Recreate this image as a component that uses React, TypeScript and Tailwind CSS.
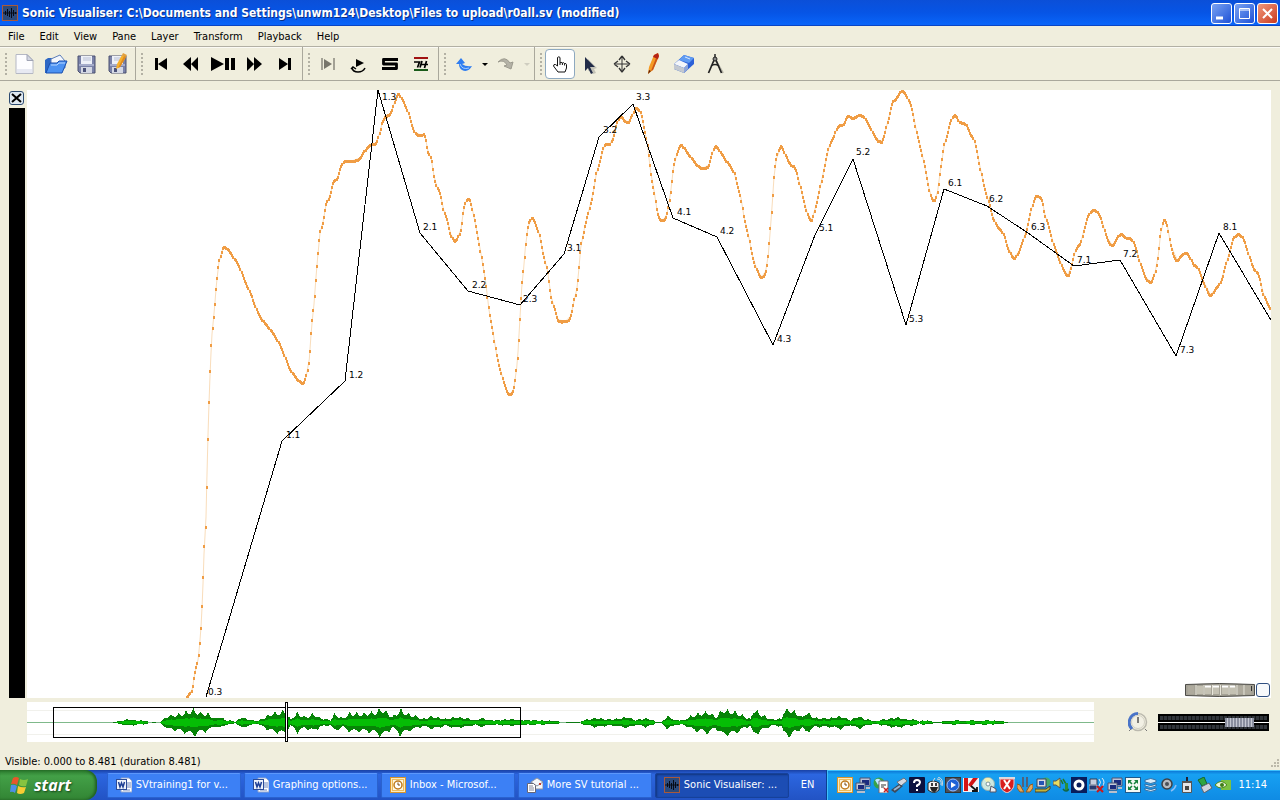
import { useState, type ReactNode } from "react"

type Point = [number, number]

// Pitch track, in window coordinates
const pitchPoints: Point[] = [
  [187, 697], [192, 690], [193, 685], [194, 678], [196, 668], [198, 660], [199, 651], [200, 640], [201, 627],
  [202, 608], [203, 584], [204, 554], [206, 517], [207, 474], [208, 435], [209, 403], [210, 376], [211, 353],
  [212, 334], [213.7, 317], [215, 302], [216, 289], [217, 279], [219, 262], [220.7, 256], [222.7, 249],
  [224.3, 247], [229.3, 251], [233.3, 257], [239.3, 266], [243.3, 277], [251, 294], [258.3, 313], [264.3, 322],
  [270, 329], [275.7, 337], [283, 351], [289, 367], [295, 376], [299.3, 381], [302, 383], [304.7, 381],
  [306.7, 374], [309.3, 359], [311, 335], [312.3, 320], [314, 304], [316, 277], [317.7, 257], [320, 233],
  [323, 222], [326, 205], [330, 195], [333.3, 183], [337.7, 177], [341, 167], [345, 161], [351.7, 161],
  [360, 158], [365.3, 150], [370, 145], [376, 143], [380, 132], [382, 123], [385.7, 117], [391.3, 112],
  [395, 101], [398.3, 94], [402.3, 99], [407.7, 111], [414.7, 132], [420.7, 135], [425, 136], [428, 151],
  [431.3, 159], [434, 176], [436.7, 186], [440.3, 194], [443.7, 210], [447.3, 220], [450.7, 234], [455.3, 241],
  [458, 237], [461, 229], [463.3, 212], [465.7, 202], [468.7, 199], [471, 203], [474, 217], [477, 232],
  [480.7, 252], [485.7, 282], [489, 310], [493, 332], [496.7, 355], [500, 368], [504, 383], [507.7, 392],
  [510.3, 394], [513.7, 389], [516.7, 368], [518, 352], [519.7, 323], [521.7, 288], [523.7, 268], [525.3, 248],
  [528, 227], [532, 218], [535.7, 224], [539.3, 234], [543, 252], [547.7, 272], [551, 296], [554.7, 309],
  [558.3, 320], [565.7, 321], [570.7, 316], [574.3, 300], [577, 288], [578.7, 271], [580.7, 248], [584.3, 229],
  [589, 210], [593.3, 192], [596.3, 174], [600, 161], [604.7, 145], [610, 144], [614, 135], [616.7, 124],
  [621, 116], [624.3, 120], [628.3, 122], [632.3, 115], [636.3, 108], [640, 111], [643, 122], [647.3, 144],
  [650.7, 172], [654.3, 192], [657, 210], [660, 219], [663.3, 220], [667, 214], [670.7, 192], [673.3, 169],
  [677.3, 152], [681.7, 145], [685.7, 150], [691.7, 158], [698.3, 166], [703.3, 168], [709, 165], [712.3, 153],
  [716, 146], [720, 151], [726.7, 161], [734, 172], [737.3, 185], [741, 198], [744, 217], [748, 233],
  [752.3, 255], [756.7, 269], [761.7, 277], [765.7, 271], [768.3, 255], [770.3, 230], [772.3, 203], [774, 177],
  [776.3, 159], [781.3, 146], [786, 156], [790.7, 164], [795.7, 169], [799.3, 182], [803.3, 198], [807.3, 213],
  [811.7, 220], [815.3, 208], [820, 188], [824.3, 168], [829.3, 146], [833.3, 138], [837.7, 127], [843.3, 124],
  [848.3, 116], [852.7, 118], [860, 115], [865, 118], [870.7, 128], [876, 138], [881.3, 142], [884.7, 134],
  [888.7, 118], [892.7, 103], [897.3, 97], [902, 91], [906.7, 96], [912.3, 110], [916.7, 132], [921.7, 152],
  [925.7, 171], [929, 188], [931.7, 198], [935, 200], [937.7, 191], [940, 173], [942.3, 158], [944.3, 145],
  [947.7, 133], [951, 121], [955, 115], [960, 122], [965.7, 124], [970, 133], [974.3, 140], [977.3, 153],
  [980.7, 170], [984, 185], [988.3, 200], [992.3, 215], [996.7, 225], [1003.3, 233], [1008.3, 248],
  [1014.3, 258], [1019, 251], [1024.3, 237], [1028.3, 223], [1031.7, 208], [1036.7, 196], [1042.3, 201],
  [1045, 215], [1049.3, 228], [1053.3, 243], [1059, 258], [1064, 270], [1068, 275], [1071.7, 265], [1076, 249],
  [1080.7, 243], [1084, 230], [1088.3, 216], [1093.3, 210], [1097.3, 212], [1101.7, 220], [1106.7, 237],
  [1112.3, 245], [1117.3, 238], [1121, 234], [1126.7, 238], [1131.7, 239], [1136, 248], [1140, 262],
  [1145.7, 277], [1150.7, 282], [1155, 273], [1158.3, 255], [1160.7, 233], [1164, 220], [1167.3, 225],
  [1170.7, 245], [1177.3, 260], [1181.7, 255], [1186, 253], [1190, 257], [1193.3, 264], [1197.3, 267],
  [1203.3, 281], [1210.7, 295], [1216, 288], [1220.7, 282], [1225, 268], [1230, 250], [1234, 238], [1238.7, 234],
  [1244, 240], [1249, 255], [1253.3, 267], [1259, 276], [1263.3, 293], [1270, 308],
]

const tempoPoints: Point[] = [
  [206, 697], [282, 441], [345, 381], [378, 90], [420, 233], [468, 291], [520, 305], [564, 254], [599, 137],
  [633, 104], [673, 218], [717, 237], [773, 345], [815, 235], [853, 159], [906, 325], [944, 189], [987, 206],
  [1028, 233], [1074, 266], [1120, 260], [1176, 356], [1219, 233], [1272, 322],
]

const beatLabels: [string, number, number][] = [
  ["0.3", 208, 695], ["1.1", 286, 438], ["1.2", 349, 378], ["1.3", 382, 100], ["2.1", 423, 230],
  ["2.2", 472, 288], ["2.3", 523, 302], ["3.1", 567, 251], ["3.2", 603, 133], ["3.3", 636, 100],
  ["4.1", 677, 215], ["4.2", 720, 234], ["4.3", 777, 342], ["5.1", 819, 231], ["5.2", 856, 155],
  ["5.3", 909, 322], ["6.1", 948, 186], ["6.2", 989, 202], ["6.3", 1031, 230], ["7.1", 1077, 263],
  ["7.2", 1123, 257], ["7.3", 1180, 353], ["8.1", 1223, 230],
]

// Overview envelope: x, half height
const envelope: Point[] = [
  [113, 0], [120, 1], [127, 3], [134, 2], [147, 1], [148, 0], [159, 0], [161, 1], [167, 6], [180, 8], [193, 12],
  [200, 9], [208, 8], [215, 3], [219, 6], [225, 2], [233, 1], [235, 0], [237, 2], [241, 5], [247, 3], [257, 1],
  [263, 4], [270, 8], [280, 10], [284, 11], [290, 3], [297, 9], [305, 5], [313, 8], [320, 4], [330, 2], [334, 8],
  [342, 4], [350, 9], [360, 8], [370, 9], [375, 10], [382, 13], [392, 5], [400, 12], [407, 8], [415, 6], [422, 3],
  [432, 6], [445, 3], [455, 5], [465, 4], [475, 2], [480, 4], [490, 2], [500, 2], [510, 3], [520, 2], [530, 2],
  [558, 1], [560, 0], [580, 0], [583, 2], [595, 4], [605, 3], [615, 3], [627, 5], [635, 2], [645, 4], [653, 2],
  [655, 0], [661, 0], [663, 2], [667, 6], [675, 2], [683, 2], [693, 7], [708, 10], [715, 5], [722, 12], [735, 10],
  [745, 5], [750, 3], [753, 13], [760, 8], [770, 3], [781, 3], [783, 11], [790, 13], [802, 5], [805, 10],
  [815, 4], [830, 4], [840, 6], [848, 3], [850, 2], [858, 6], [865, 3], [874, 1], [885, 3], [897, 5], [905, 3],
  [917, 2], [919, 0], [922, 2], [930, 1], [934, 0], [950, 1], [955, 2], [963, 1], [970, 2], [978, 1], [985, 2],
  [999, 1], [1008, 0],
]

function valueAt(points: Point[], x: number) {
  for (let i = 1; i < points.length; i++) {
    const [x0, y0] = points[i - 1]
    const [x1, y1] = points[i]
    if (x <= x1) return y0 + ((x - x0) / (x1 - x0)) * (y1 - y0)
  }
  return points[points.length - 1][1]
}

// Hermite interpolation, flat at the turning points so peaks stay round
function smoothAt(points: Point[], x: number) {
  const last = points.length - 1
  const slope = (i: number) => (points[i + 1][1] - points[i][1]) / (points[i + 1][0] - points[i][0])
  const tangent = (i: number) => {
    if (i <= 0 || i >= last) return slope(i <= 0 ? 0 : last - 1)
    if (slope(i - 1) * slope(i) <= 0) return 0
    return (points[i + 1][1] - points[i - 1][1]) / (points[i + 1][0] - points[i - 1][0])
  }
  let i = 0
  while (i < last - 1 && x > points[i + 1][0]) i++
  const [x0, y0] = points[i]
  const [x1, y1] = points[i + 1]
  const h = x1 - x0
  const t = Math.min(1, (x - x0) / h)
  const u = 1 - t
  return (1 + 2 * t) * u * u * y0 + t * u * u * h * tangent(i) + t * t * (3 - 2 * t) * y1 - t * t * u * h * tangent(i + 1)
}

const toPath = (points: Point[]) => points.map(([x, y], i) => `${i ? "L" : "M"}${x} ${y}`).join("")

function dotsPath() {
  let d = ""
  for (let x = 187; x < 1271; x += 1.16) {
    d += `M${Math.round(x) - 1} ${Math.round(smoothAt(pitchPoints, x)) - 1}h2v3h-2z`
  }
  return d
}

function wavePath(scale: number, rough: number) {
  let d = ""
  for (let x = 113; x < 1008; x++) {
    const amp = valueAt(envelope, x)
    if (amp < 0.4) continue
    const up = amp * scale * (1 - rough * Math.abs(Math.sin(x * 12.9898)))
    const down = amp * scale * (1 - rough * Math.abs(Math.sin(x * 78.233)))
    d += `M${x} ${722 - Math.round(up)}v${Math.round(up) + Math.round(down) + 1}`
  }
  return d
}

const menus = ["File", "Edit", "View", "Pane", "Layer", "Transform", "Playback", "Help"]

function Svg({ children, size = 24 }: { children: ReactNode; size?: number }) {
  return (
    <svg width={size} height={size} viewBox={`0 0 ${size} ${size}`} className="shrink-0" aria-hidden="true">
      {children}
    </svg>
  )
}

function WaveLogo() {
  return (
    <Svg size={16}>
      <rect x="0.5" y="0.5" width="15" height="15" fill="#2b4a7c" stroke="#a8593c" />
      <path d="M1 8h14" stroke="#0a0f1c" />
      <path d="M3.500 6v4M5.500 4v7M7.500 6v6M9.500 3v10M11.500 5v6M13.500 7v2" stroke="#060a14" fill="none" />
    </Svg>
  )
}

type ToolProps = { label: string; active?: boolean; disabled?: boolean; narrow?: boolean; onClick?: () => void; children: ReactNode }

function Tool({ label, active, disabled, narrow, onClick, children }: ToolProps) {
  return (
    <button
      type="button"
      aria-label={label}
      disabled={disabled}
      onClick={onClick}
      className={`flex h-[30px] items-center justify-center rounded border ${narrow ? "w-[10px]" : "w-[30px]"} ${
        active ? "border-[#8ea9c0] bg-white" : "border-transparent"
      }`}
    >
      {children}
    </button>
  )
}

function ToolGroup({ children, last }: { children: ReactNode; last?: boolean }) {
  return (
    <div className={`flex h-full items-center ${last ? "pl-[5px]" : "border-r border-[#aaa89c] pr-[2px] pl-[5px]"}`}>
      <div className="mr-[3px] flex flex-col gap-[2px]">
        {[0, 1, 2, 3, 4, 5].map((n) => (
          <span key={n} className="h-[2px] w-[2px] bg-[#b3b1a4]" />
        ))}
      </div>
      <div className="flex gap-px">{children}</div>
    </div>
  )
}

const floppy = (
  <>
    <path d="M3 4h17v17H5l-2-2z" fill="#7a82a8" stroke="#4b5070" />
    <path d="M6 4h11v8H6z" fill="#eef1f8" />
    <path d="M8 6h8M8 8h8" stroke="#b8bfd4" />
    <path d="M4 12h15v2H4z" fill="#a6adcb" />
    <path d="M6 15h11v6H6z" fill="#d4d8e4" />
    <path d="M8 16h3v4H8z" fill="#4b5278" />
  </>
)

const toolModes: { name: string; icon: ReactNode }[] = [
  {
    name: "Navigate",
    icon: (
      <path
        d="M9.500 14V5.500q1.500-1.500 2.500 0V11q1-1.500 2.300 0 1.300-1 2.200.5 1.500-.5 2 1V16l-1.500 4H10l-4.500-6q0-2 2-1.500z M12 11v2M14.400 11v2M16.600 11.500v2"
        fill="#fff"
        stroke="#111"
      />
    ),
  },
  {
    name: "Select",
    icon: (
      <>
        <path d="M9 7l9 9-3 1 2 4-3 1-2-5-3 2z" fill="#c4c3b8" />
        <path d="M6 5l10 10h-5l3 6-2 1-3-6-3 3z" fill="#222c48" />
      </>
    ),
  },
  {
    name: "Edit",
    icon: (
      <>
        <path d="M12 5v14M5 12h14" stroke="#333" />
        <path d="M12 4l-3 4M12 4l3 4M12 20l-3-4M12 20l3-4M4 12l4-3M4 12l4 3M20 12l-4-3M20 12l-4 3" stroke="#333" strokeWidth="1.300" />
      </>
    ),
  },
  {
    name: "Draw",
    icon: (
      <>
        <path d="M13 3l4-2 1 3-6 14-5 4 1-7z" fill="#f59a23" />
        <path d="M17 6l-5 12-2 1 5-13z" fill="#c9541a" />
        <path d="M13 3l4-2 1 3-1 3-5-2z" fill="#b52318" />
        <path d="M8 18l2 1-3 3z" fill="#5c1c08" />
      </>
    ),
  },
  {
    name: "Erase",
    icon: (
      <>
        <path d="M12 3l10 3v6l-10 9-10-4v-5z" fill="#2c61d8" />
        <path d="M12 3l10 3-5 5-10-3z" fill="#5f9bf2" />
        <path d="M13 5l5 2" stroke="#d9e7fc" />
        <path d="M2 12l5-4 9 4-4 4z" fill="#f4f6fa" />
        <path d="M2 12l10 4v5l-10-4z" fill="#c3c8d0" />
        <path d="M12 16l4-4v5l-4 4z" fill="#8fa6d8" />
      </>
    ),
  },
  {
    name: "Measure",
    icon: (
      <>
        <path d="M13 9l7 12" stroke="#b8b6a8" strokeWidth="2" />
        <path d="M11.500 7L5.500 21M12.500 7l6 14M8 14q4-3 8 0" stroke="#222" strokeWidth="1.700" fill="none" />
        <path d="M12 2v4" stroke="#222" strokeWidth="1.500" />
        <circle cx="12" cy="7" r="2" fill="#888" stroke="#222" />
      </>
    ),
  },
]

function Toolbar() {
  const [mode, setMode] = useState("Navigate")
  return (
    <div className="flex h-[35px] shrink-0 items-center border-y border-[#aaa89c] border-t-[#b2b0a4] shadow-[inset_0_1px_#fbfaf4]">
      <ToolGroup>
        <Tool label="New session">
          <Svg>
            <path d="M3 2.500h11l6 6v13H3z" fill="#fdfdff" stroke="#b5b8c4" />
            <path d="M4 17h15v4H4z" fill="#e7e9f2" />
            <path d="M14 2.500v6h6z" fill="#d2d6e2" stroke="#a0a4b4" />
          </Svg>
        </Tool>
        <Tool label="Open">
          <Svg>
            <path d="M1 8l3-2h4l2 2v13H1z" fill="#2d67c4" />
            <path d="M7 7l9-4 5 6v7H7z" fill="#f4f7fc" stroke="#5b7db8" />
            <path d="M2 21l4-10h7l2-2h8l-5 12H2z" fill="#4c92f2" stroke="#1b4fae" />
            <path d="M7 13h6l2-2h6" stroke="#b5d5ff" fill="none" />
          </Svg>
        </Tool>
        <Tool label="Save">
          <Svg>{floppy}</Svg>
        </Tool>
        <Tool label="Save as">
          <Svg>
            {floppy}
            <path d="M10 17l1-5 5-9 4 2-6 10z" fill="#f6b02c" />
            <path d="M18 4l2 1-6 10-2 1z" fill="#e08a1c" />
            <path d="M16 3l1-2 4 2-1 2z" fill="#e3a03c" />
          </Svg>
        </Tool>
      </ToolGroup>
      <ToolGroup>
        <Tool label="Rewind to start">
          <Svg><path d="M6 6h3v12H6zM18 6v12l-9-6z" /></Svg>
        </Tool>
        <Tool label="Rewind">
          <Svg><path d="M11 5v14l-8-7zM18 5v14l-7-7z" /></Svg>
        </Tool>
        <Tool label="Play / Pause">
          <Svg><path d="M0 5l13 7-13 7zM14 6h4v12h-4zM20 6h4v12h-4z" /></Svg>
        </Tool>
        <Tool label="Fast forward">
          <Svg><path d="M5 5l7 7-7 7zM12 5l8 7-8 7z" /></Svg>
        </Tool>
        <Tool label="Fast forward to end">
          <Svg><path d="M6 6l9 6-9 6zM15 6h3v12h-3z" /></Svg>
        </Tool>
      </ToolGroup>
      <ToolGroup>
        <Tool label="Play selection">
          <Svg>
            <path d="M6 6v12M18 6v12" stroke="#a3a195" strokeWidth="2" />
            <path d="M8 7l8 5-8 5z" fill="#77756b" />
          </Svg>
        </Tool>
        <Tool label="Loop">
          <Svg>
            <path d="M9 7l8 4-8 4z" />
            <path d="M5 16q1 4 6 4 5 0 7-4M4 17l2-2 3 2" fill="none" stroke="#000" strokeWidth="1.500" />
          </Svg>
        </Tool>
        <Tool label="Solo">
          <Svg>
            <path d="M20 7.500H5.500V12h13v4.500H4" fill="none" stroke="#000" strokeWidth="2.800" strokeLinejoin="round" />
          </Svg>
        </Tool>
        <Tool label="Align">
          <Svg>
            <path d="M5 6h14" stroke="#a11212" strokeWidth="2" />
            <path d="M5 18h14" stroke="#1a5b1a" strokeWidth="2" />
            <path d="M5 10h5.500l-2 5.500M11 15.500L13 9" stroke="#000" strokeWidth="1.700" fill="none" />
            <path d="M12 12.500h7M17.500 9l-2 7" stroke="#000" strokeWidth="1.700" fill="none" />
          </Svg>
        </Tool>
      </ToolGroup>
      <ToolGroup>
        <Tool label="Undo">
          <Svg>
            <path d="M4 12l5-6 4 5-3 1q4 3 10 2-4 7-10 4-3-2-3-6z" fill="#2f7df0" />
            <path d="M8 12q2 6 9 4" stroke="#a9d0ff" fill="none" />
          </Svg>
        </Tool>
        <Tool label="Undo history" narrow>
          <Svg size={6}><path d="M0 2h6L3 5z" /></Svg>
        </Tool>
        <Tool label="Redo" disabled>
          <Svg>
            <path d="M4 10q7-7 12 1l3-1-2 7-7-3 3-1q-3-6-9-3z" fill="#b4b2a6" stroke="#9c9a8e" />
          </Svg>
        </Tool>
        <Tool label="Redo history" narrow disabled>
          <Svg size={6}><path d="M0 2h6L3 5z" fill="#cfcdc0" /></Svg>
        </Tool>
      </ToolGroup>
      <ToolGroup last>
        {toolModes.map((tool) => (
          <Tool key={tool.name} label={tool.name} active={mode === tool.name} onClick={() => setMode(tool.name)}>
            <Svg>{tool.icon}</Svg>
          </Tool>
        ))}
      </ToolGroup>
    </div>
  )
}

function Chart() {
  return (
    <div className="relative min-w-0 flex-1 bg-white">
      <svg className="block h-full w-full overflow-hidden" role="img" aria-label="Pitch and tempo layers">
        <g transform="translate(-27 -90)">
          <path d={toPath(pitchPoints)} fill="none" stroke="#f9ddbb" />
          <path d={dotsPath()} fill="#f09d45" shapeRendering="crispEdges" />
          <path d={toPath(tempoPoints)} fill="none" stroke="#000" shapeRendering="crispEdges" />
          {beatLabels.map(([text, x, y]) => (
            <text key={text} x={x} y={y} className="text-[9px]" fontFamily="'DejaVu Sans', sans-serif">
              {text}
            </text>
          ))}
        </g>
      </svg>
      {/* Zoom controls */}
      <div className="absolute right-[1px] bottom-[1px] flex items-center gap-px">
        <button type="button" aria-label="Horizontal zoom">
          <svg width="70" height="14" viewBox="0 0 70 14">
            <path d="M0.500 1.500q34-2 69 0v11q-35 2-69 0z" fill="#a5a296" stroke="#4c4b47" />
            {[3, 12, 20, 28, 37, 45, 53, 60].map((x, i) => (
              <rect key={x} x={x} y="3" width="6" height="8" fill={i > 0 && i < 6 ? "#c4c1b3" : "#aeaa9d"} />
            ))}
            <path d="M20 3.500h6M28 3.500h6M37 3.500h6M45 3.500h5" stroke="#fff" strokeWidth="2" />
            <path d="M11 2v10M19 2v10M27.500 2v10M35.500 2v10M44 2v10M52 2v10M59 2v10" stroke="#e9e7dc" />
            <path d="M66.500 3v5" stroke="#333" />
          </svg>
        </button>
        <button type="button" aria-label="Reset zoom" className="h-[14px] w-[14px] rounded-[3px] border border-[#2f4f80] bg-[#f7f9fb]" />
      </div>
    </div>
  )
}

function Overview() {
  return (
    <div className="h-10 w-[1067px] min-w-0 bg-white">
      <svg className="block h-full w-full" role="img" aria-label="Waveform overview">
        <g transform="translate(-27 -702)" shapeRendering="crispEdges">
          <path d="M27 710.500h1067M27 734.500h1067" stroke="#f1f1ec" />
          <path d="M27 722.500h1067" stroke="#7fb98a" />
          <path d="M113 722.500h35M152 722.500h4M160 722.500h400M566 722.500h14M583 722.500h425" stroke="#0b7a12" />
          <g transform="translate(0.500 0)" fill="none">
            <path d={wavePath(1.2, 0.4)} stroke="#078407" />
            <path d={wavePath(0.4, 0.2)} stroke="#05bd05" />
          </g>
          <rect x="53.500" y="707.500" width="467" height="30" fill="none" stroke="#000" />
          <rect x="285.500" y="702.500" width="2" height="39" fill="#fff" stroke="#000" />
        </g>
      </svg>
    </div>
  )
}

function PlaybackControls() {
  const [gain, setGain] = useState(82)
  return (
    <div className="flex items-center gap-[10px]">
      <button type="button" aria-label="Playback speed">
        <svg width="20" height="20" viewBox="0 0 20 20">
          <circle cx="10" cy="10" r="8.500" fill="none" stroke="#bbb9ae" strokeWidth="1.500" />
          <path d="M4 17A9 9 0 0 1 10 1.500" fill="none" stroke="#4a74c8" strokeWidth="3" />
          <circle cx="10" cy="10" r="6.500" fill="#f2f0e4" stroke="#d2d0c4" />
          <path d="M10 5v6" stroke="#555" strokeWidth="1.500" />
          <path d="M1 19l2-2M19 19l-2-2" stroke="#777" />
        </svg>
      </button>
      <div className="relative flex h-[17px] w-[111px] flex-col justify-between bg-white">
        <div className="h-2 border-2 border-black bg-[repeating-linear-gradient(90deg,#30343a_0_3px,#15171a_3px_4px)]" />
        <div className="h-2 border-2 border-black bg-[repeating-linear-gradient(90deg,#30343a_0_3px,#15171a_3px_4px)]" />
        <input
          type="range"
          aria-label="Playback volume"
          value={gain}
          onChange={(e) => setGain(Number(e.target.value))}
          className="absolute inset-0 m-0 h-full w-full appearance-none bg-transparent [&::-webkit-slider-thumb]:h-[9px] [&::-webkit-slider-thumb]:w-[29px] [&::-webkit-slider-thumb]:appearance-none [&::-webkit-slider-thumb]:bg-[repeating-linear-gradient(90deg,#8b8fa0_0_2px,#c4c7d2_2px_3px)]"
        />
      </div>
    </div>
  )
}

const wordIcon = (
  <Svg size={16}>
    <path d="M5 1h8l3 3v11H5z" fill="#fff" stroke="#8fa3cc" />
    <path d="M11 6h4M11 8h4M11 10h4M7 13h7" stroke="#6d86bd" />
    <rect x="0.500" y="2.500" width="10" height="10" fill="#eef3fc" stroke="#2a4b98" />
    <path d="M2.500 5l1.500 5 1.500-4L7 10l1.500-5" fill="none" stroke="#1d3f94" strokeWidth="1.500" />
  </Svg>
)

const clockIcon = (
  <Svg size={16}>
    <rect x="0.500" y="0.500" width="15" height="15" fill="#fbe9bd" stroke="#d9952c" />
    <rect x="2.500" y="2.500" width="11" height="11" fill="#fff7df" stroke="#eebb5a" />
    <circle cx="8" cy="8" r="4" fill="#fff" stroke="#c07a1c" strokeWidth="1.500" />
    <path d="M8 5.500V8h2" fill="none" stroke="#7a4a10" />
  </Svg>
)

const mailIcon = (
  <Svg size={16}>
    <path d="M4 5l6-4 6 4v7H4z" fill="#f5f6f8" stroke="#8b93a5" />
    <path d="M4 5l6 4 6-4" fill="none" stroke="#8b93a5" />
    <path d="M12 6h2v2h-2z" fill="#c43b2d" />
    <path d="M0.500 6.500h6l2 2v7h-8z" fill="#fff" stroke="#667" />
    <path d="M2 9h4M2 11h5M2 13h5" stroke="#889" />
  </Svg>
)

const tasks: { title: string; icon: ReactNode; active?: boolean }[] = [
  { title: "SVtraining1 for v...", icon: wordIcon },
  { title: "Graphing options...", icon: wordIcon },
  { title: "Inbox - Microsof...", icon: clockIcon },
  { title: "More SV tutorial ...", icon: mailIcon },
  { title: "Sonic Visualiser: ...", icon: <WaveLogo />, active: true },
]

const screens = (
  <>
    <path d="M5 1h10v8H5z" fill="#b9c1d8" stroke="#4a5474" />
    <path d="M7 3h7v5H7z" fill="#1b2b7e" />
    <path d="M1 6h9v7H1z" fill="#c3cada" stroke="#4a5474" />
    <path d="M3 8h6v4H3z" fill="#1b2b7e" />
    <path d="M2 15h8M11 11h4" stroke="#b9bfcc" strokeWidth="2" />
  </>
)

const trayIcons: [string, ReactNode][] = [
  ["Outlook", clockIcon],
  ["Network", screens],
  ["Server", <><circle cx="6" cy="6" r="5.500" fill="#37a14a" /><path d="M2 3q4-3 6 1L5 8z" fill="#bfe6ff" /><path d="M6 4h9v12H6z" fill="#fff" stroke="#667" /><path d="M8 8h5M8 10h3" stroke="#333" /><path d="M11 11l4 4M15 11l-4 4" stroke="#c92222" strokeWidth="1.500" /></>],
  ["Safely remove", <><path d="M6 5l7-4 3 3-6 5z" fill="#d4d8df" stroke="#69707e" /><path d="M0 13l8-6 4 2-8 7z" fill="#3d4858" /><path d="M3 13l6-4" stroke="#9fb3cc" strokeWidth="2" /></>],
  ["Help", <><rect width="16" height="16" rx="1" fill="#0b1240" /><path d="M5 6q0-3 3-3t3 2.500q0 1.500-3 3V10M8 12v2" fill="none" stroke="#fff" strokeWidth="2" /></>],
  ["Messenger", <><path d="M1 6q5-4 11 0v7q-5 5-11 0z" fill="#f1f1f1" stroke="#222" /><path d="M3 10h8q-1 5-4 5t-4-5z" fill="#222" /><path d="M5 6v3M9 6v3" stroke="#000" strokeWidth="1.500" /><path d="M10 2q5 0 4 6M11 0q6 2 4 9M8 1l-2 3" fill="none" stroke="#ddd" /></>],
  ["Media", <><rect x="0.500" y="0.500" width="15" height="15" fill="#4a4f59" stroke="#333" /><circle cx="8" cy="8" r="6" fill="#1f62d6" stroke="#9cc0ff" /><path d="M6 5l5 3-5 3z" fill="#fff" /></>],
  ["Antivirus", <><path d="M0 1h16v14H0z" fill="#f0f2f5" /><path d="M1 1h4v13H1zM5 8l5-7h5L8 10z" fill="#d41414" /><path d="M8 9l6 5M14 10v4h-5" stroke="#111" strokeWidth="1.800" fill="none" /></>],
  ["CD writer", <><circle cx="7" cy="7" r="6.500" fill="#cfe8e0" stroke="#8fb0b2" /><path d="M7 7L3 2q4-2 7 0z" fill="#f4f1b5" /><circle cx="7" cy="7" r="2" fill="#fff" stroke="#78969a" /><path d="M10 9l5 3v3H9z" fill="#e9edf2" stroke="#556" /></>],
  ["Shield", <><path d="M0 0h16v2H0z" fill="#d9dce2" /><path d="M1 2h14v5q0 6-7 9-7-3-7-9z" fill="#d81e1e" stroke="#f2c9c9" /><path d="M5 3l6 9M11 3l-6 9" stroke="#fff" strokeWidth="2" /></>],
  ["Hands", <><path d="M5 0h2v10H5zM9 0h2v10H9z" fill="#50617c" /><path d="M0 7l3 1 4 7H3L0 11zM16 7l-3 1-4 7h4l3-4z" fill="#e6a85a" stroke="#8e5b22" /></>],
  ["Remote", <><circle cx="11" cy="5" r="4.500" fill="#46a868" /><path d="M2 2h9v8H2z" fill="#d6dae3" stroke="#3a4258" /><path d="M4 4h5v4H4z" fill="#2453b4" /><path d="M0 12h11l4-3v3l-4 3H0z" fill="#c2b23c" stroke="#48452a" /></>],
  ["Sound", <><path d="M0 4h3l4-3v10L3 8H0z" fill="#e9dc62" stroke="#555" /><path d="M8 3l2 4M10 2l3 5" stroke="#1e7a2c" strokeWidth="1.500" /><path d="M12 6h3v7h-3z" fill="#2b8f39" /><path d="M10 12q3 4 6 0" stroke="#164" fill="none" strokeWidth="1.500" /></>],
  ["Quick look", <><rect width="16" height="16" fill="#081d5c" /><circle cx="8" cy="8" r="4" fill="none" stroke="#fff" strokeWidth="3" /></>],
  ["Wireless", <><path d="M1 2h7v6H1z" fill="#c8cede" stroke="#333c55" /><path d="M0 8h8v5H0z" fill="#28386e" stroke="#b8bfcd" /><path d="M10 2q3 3 0 7M13 1q4 4 0 9" stroke="#e8ecf2" fill="none" /><path d="M8 9l6 6M14 9l-6 6" stroke="#d01616" strokeWidth="2" /></>],
  ["Local network", screens],
  ["Display", <><rect x="0.500" y="0.500" width="15" height="15" fill="#f4f8f4" stroke="#1f5a8c" /><path d="M3 3h4L3 7zM13 3H9l4 4zM3 13h4L3 9zM13 13H9l4-4z" fill="#16803b" /><path d="M4 4l3 3M12 4L9 7M4 12l3-3M12 12L9 9" stroke="#16803b" strokeWidth="1.500" /></>],
  ["Database", <><path d="M2 3q6-3 11 0v2q-5 3-11 0zM2 7q6 3 11 0v2q-5 3-11 0zM2 11q6 3 11 0v2q-5 3-11 0z" fill="#dcecf7" stroke="#2f6ea6" /></>],
  ["Volume", <><circle cx="6" cy="7" r="5" fill="#b9bbc0" stroke="#3d4046" strokeWidth="1.500" /><circle cx="6" cy="7" r="2" fill="#4c5057" /><path d="M10 14q4-2 5-6" stroke="#8abef5" fill="none" strokeWidth="1.500" /></>],
  ["Battery", <><path d="M7 0h2v4H7z" fill="#223" /><path d="M3.500 4.500h9v11h-9z" fill="#e4e5e8" stroke="#555" /><path d="M3 4h10v2H3z" fill="#555" /><path d="M6 9h4v4H6z" fill="#444" /></>],
  ["Eject", <><path d="M1 3l6-3 3 7-5 2z" fill="#2fa53f" stroke="#17662a" /><path d="M4 10l8-4 3 5-8 5z" fill="#d0d4dc" stroke="#5b6270" /></>],
  ["Graphics", <><path d="M6 3h10v10H6z" fill="#7cc142" /><path d="M0 8q6-7 12 0-6 6-12 0z" fill="#e8f5d9" stroke="#4d8a1e" /><circle cx="7" cy="8" r="2" fill="#3f7d17" /></>],
]

function Taskbar() {
  return (
    <footer className="flex h-[30px] shrink-0 items-center bg-linear-to-b from-[#1941a5] via-[#2c66e0] via-15% to-[#2253c4] text-white">
      <button
        type="button"
        className="flex h-full w-[97px] items-center gap-[6px] rounded-r-xl bg-linear-to-b from-[#2a7a2c] via-[#43a047] via-20% to-[#328534] pl-[10px] shadow-[inset_-2px_0_3px_#1f5c21]"
      >
        <Svg size={18}>
          <path d="M3 2q3-2 6 0L7 9Q4 7 1 8z" fill="#e8562a" />
          <path d="M10 3q4 2 8 0l-2 7q-4 1-7-1z" fill="#86c440" />
          <path d="M1 9q3-1 6 1l-2 7q-2-2-5-1z" fill="#4d8fe8" />
          <path d="M8 10q4 2 8 1l-2 6q-4 2-7 0z" fill="#f8cc33" />
        </Svg>
        <span className="text-[16px] leading-none font-bold italic [text-shadow:1px_1px_2px_#14451a]" style={{ fontFamily: "'Open Sans', sans-serif" }}>
          start
        </span>
      </button>
      <nav aria-label="Running applications" className="flex h-full items-center gap-[3px] pl-[10px]">
        {tasks.map((task) => (
          <button
            key={task.title}
            type="button"
            className={`flex h-[25px] w-[134px] items-center gap-1 overflow-hidden rounded-[2px] border pl-2 text-left whitespace-nowrap ${
              task.active
                ? "border-[#16419a] bg-[#1c4db4] shadow-[inset_1px_1px_2px_#12357f]"
                : "border-[#2a62cf] border-t-[#5b97fb] bg-[#3c80f5]"
            }`}
          >
            {task.icon}
            <span>{task.title}</span>
          </button>
        ))}
      </nav>
      <span className="px-3">EN</span>
      <div className="ml-auto flex h-full items-center border-l border-[#0a3f92] bg-linear-to-b from-[#0d6fd0] via-[#17a0f2] via-15% to-[#0f8be4] pr-[13px] pl-[10px] shadow-[inset_1px_1px_#3fc0fb]">
        <div className="flex gap-[2px]">
          {trayIcons.map(([name, icon]) => (
            <button key={name} type="button" aria-label={name}>
              {name === "Outlook" ? icon : <Svg size={16}>{icon}</Svg>}
            </button>
          ))}
        </div>
        <time className="pl-[7px]">11:14</time>
      </div>
    </footer>
  )
}

export default function App() {
  return (
    <div
      className="flex min-h-screen flex-col overflow-hidden bg-[#f0eedd] text-[11px] leading-4 text-black"
      style={{ fontFamily: "'DejaVu Sans Condensed', 'DejaVu Sans', sans-serif" }}
    >
      {/* Title Bar */}
      <header className="flex h-[26px] shrink-0 items-center gap-1 bg-linear-to-b from-[#0b4fd8] via-[#0655e6] to-[#0a66fb] pr-[2px] pl-[2px] text-white shadow-[inset_0_-1px_#0a45c4]">
        <WaveLogo />
        <h1 className="flex-1 truncate text-[12px] leading-5 font-bold [text-shadow:1px_1px_#0a2f86]">
          {"Sonic Visualiser: C:\\Documents and Settings\\unwm124\\Desktop\\Files to upload\\r0all.sv (modified)"}
        </h1>
        <div className="flex gap-[2px]">
          <button type="button" aria-label="Minimise" className="h-[21px] w-[21px] rounded-[3px] border border-white bg-linear-to-br from-[#7ba2f2] to-[#1f4fd6]">
            <svg width="19" height="19"><path d="M4 14h7" stroke="#fff" strokeWidth="3" /></svg>
          </button>
          <button type="button" aria-label="Restore" className="h-[21px] w-[21px] rounded-[3px] border border-white bg-linear-to-br from-[#7ba2f2] to-[#1f4fd6]">
            <svg width="19" height="19"><path d="M4.500 4.500h10v10h-10zM4 6h11" fill="none" stroke="#fff" /></svg>
          </button>
          <button type="button" aria-label="Close" className="h-[21px] w-[21px] rounded-[3px] border border-white bg-linear-to-br from-[#f0977b] to-[#c9371a]">
            <svg width="19" height="19"><path d="M5 5l9 9M14 5l-9 9" stroke="#fff" strokeWidth="2" /></svg>
          </button>
        </div>
      </header>

      {/* Menu Bar */}
      <nav aria-label="Main menu" className="flex h-5 shrink-0 items-end gap-[15px] pb-px pl-2">
        {menus.map((menu) => (
          <button key={menu} type="button">
            {menu}
          </button>
        ))}
      </nav>

      <Toolbar />

      {/* Pane */}
      <main className="flex flex-1 flex-col pt-[9px] pr-[9px]">
        <div className="flex min-h-0 flex-1">
          <div className="flex w-[27px] flex-col pt-px pl-[9px]">
            <button type="button" aria-label="Close pane" className="flex h-[14px] w-[15px] items-center justify-center rounded-[3px] border border-[#2c4a70] bg-[#dfe9f2]">
              <svg width="11" height="10" viewBox="0 0 11 10"><path d="M1 1l9 8M10 1L1 9" stroke="#000" strokeWidth="2" /></svg>
            </button>
            <div className="mt-[3px] w-4 flex-1 bg-black" />
          </div>
          <Chart />
        </div>
        <div className="mt-1 flex items-center justify-between pr-[2px] pl-[27px]">
          <Overview />
          <PlaybackControls />
        </div>
      </main>

      {/* Status Bar */}
      <div className="flex h-7 shrink-0 items-end justify-between pl-[5px]">
        <p>Visible: 0.000 to 8.481 (duration 8.481)</p>
        <svg width="12" height="12" aria-hidden="true">
          <path d="M9 2h2M6 5h2M9 5h2M3 8h2M6 8h2M9 8h2" stroke="#bcb9aa" strokeWidth="2" />
        </svg>
      </div>

      <Taskbar />
    </div>
  )
}
